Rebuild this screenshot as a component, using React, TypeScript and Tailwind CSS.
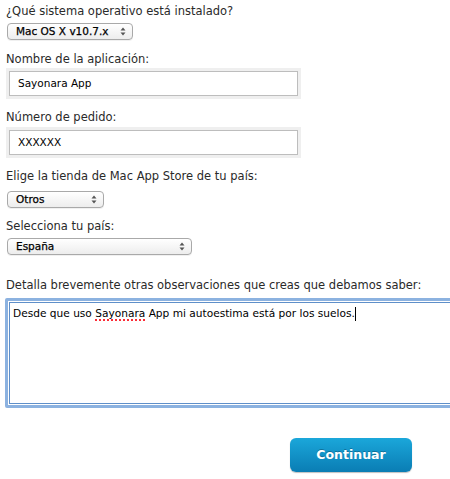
import React from "react"

function SelectBox({ value, width }: { value: string; width: string }) {
  return (
    <div
      className={`${width} h-[17px] flex items-center justify-between rounded-[4px] border border-[#a9a9a9] bg-gradient-to-b from-white to-[#ededed] pl-[8px] pr-[6px] shadow-[0_1px_0_rgba(0,0,0,0.06)]`}
    >
      <span className="whitespace-nowrap text-[10.5px] leading-none text-black [-webkit-text-stroke:0.25px_black]">
        {value}
      </span>
      <svg width="6" height="9" viewBox="0 0 6 9" className="text-[#555]">
        <path d="M3 0.5 L5.5 3.5 H0.5 Z" fill="currentColor" />
        <path d="M3 8.5 L5.5 5.5 H0.5 Z" fill="currentColor" />
      </svg>
    </div>
  )
}

function TextField({ value }: { value: string }) {
  return (
    <div className="w-[295px] h-[31px] bg-[#efefef] p-[3px]">
      <div className="h-full w-full border border-[#bdbdbd] bg-white flex items-center pl-[8px] text-[10.5px] text-black">
        {value}
      </div>
    </div>
  )
}

function Label({ children }: { children: React.ReactNode }) {
  return (
    <div className="h-[16px] whitespace-nowrap leading-[16px] text-[11.5px] text-[#2a2a2a]">
      {children}
    </div>
  )
}

export default function App() {
  return (
    <div
      className="w-[450px] h-[479px] overflow-hidden bg-white pl-[6px] pt-[3px]"
      style={{ fontFamily: '"DejaVu Sans", "Liberation Sans", sans-serif' }}
    >
      <Label>¿Qué sistema operativo está instalado?</Label>
      <div className="mt-[4px] pl-[1px]">
        <SelectBox value="Mac OS X v10.7.x" width="w-[126px]" />
      </div>

      <div className="mt-[11px]">
        <Label>Nombre de la aplicación:</Label>
      </div>
      <div className="mt-[1px]">
        <TextField value="Sayonara App" />
      </div>

      <div className="mt-[10px]">
        <Label>Número de pedido:</Label>
      </div>
      <div className="mt-[2px]">
        <TextField value="XXXXXX" />
      </div>

      <div className="mt-[10px]">
        <Label>Elige la tienda de Mac App Store de tu país:</Label>
      </div>
      <div className="mt-[7px] pl-[1px]">
        <SelectBox value="Otros" width="w-[97px]" />
      </div>

      <div className="mt-[10px]">
        <Label>Selecciona tu país:</Label>
      </div>
      <div className="mt-[4px] pl-[1px]">
        <SelectBox value="España" width="w-[185px]" />
      </div>

      <div className="mt-[22px]">
        <Label>Detalla brevemente otras observaciones que creas que debamos saber:</Label>
      </div>
      <div className="mt-[5px] -ml-[1px] w-[470px] h-[110px] rounded-[2px] border-[3px] border-[#8cb2e0] p-px">
        <div className="h-full w-full border border-[#5f8fc9] bg-white px-[3px] pt-[2px] text-[10.6px] leading-[16px] text-black">
          Desde que uso{" "}
          <span className="underline decoration-dotted decoration-red-500 decoration-2 underline-offset-2">
            Sayonara
          </span>{" "}
          App mi autoestima está por los suelos.
          <span className="inline-block w-px h-[14px] bg-black align-middle" />
        </div>
      </div>

      <div className="mt-[30px] flex pl-[284px]">
        <button className="w-[122px] h-[34px] rounded-[6px] bg-gradient-to-b from-[#1ba7da] to-[#0a7db4] text-[12.5px] font-bold text-white shadow-[0_1px_1px_rgba(0,0,0,0.25)] [text-shadow:0_-1px_0_rgba(0,0,0,0.25)]">
          Continuar
        </button>
      </div>
    </div>
  )
}
